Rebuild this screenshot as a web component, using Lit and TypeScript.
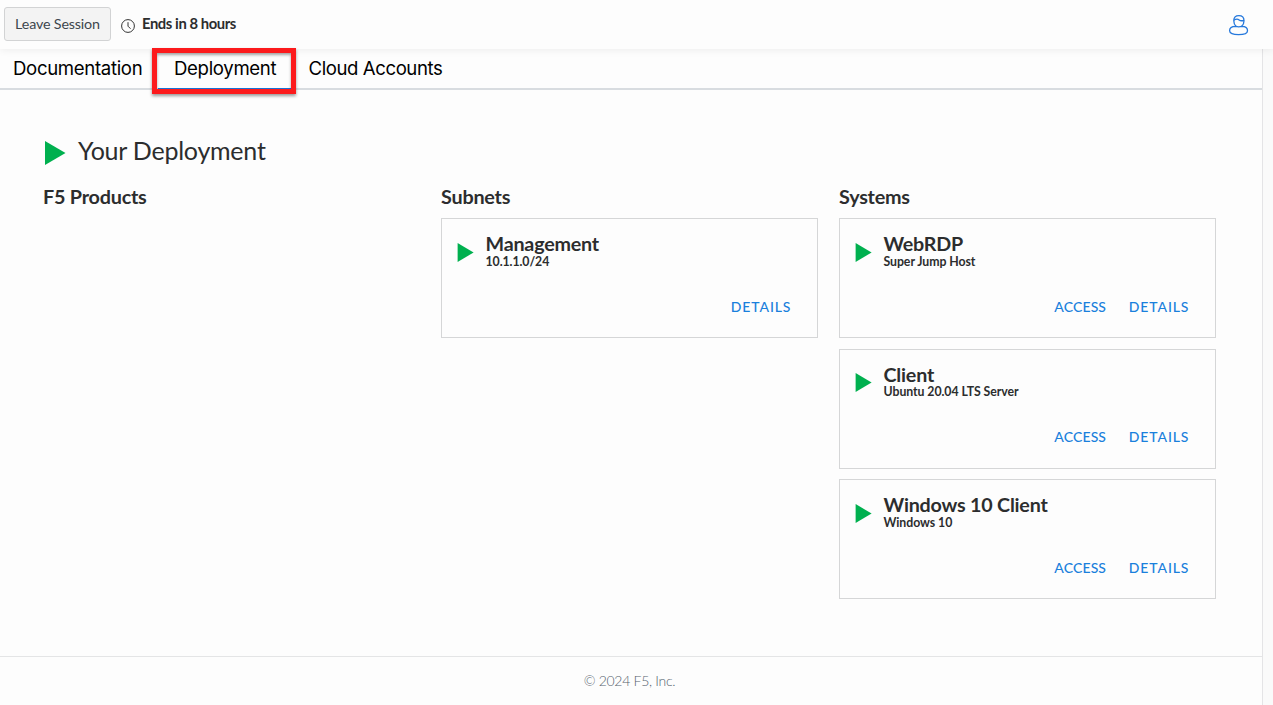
import { LitElement, html, css, nothing } from "lit";
import { customElement, property } from "lit/decorators.js";

const INK = css`#2c2d2e`;

@customElement("resource-card")
class ResourceCard extends LitElement {
  @property() name = "";
  @property() detail = "";
  @property({ type: Boolean }) access = false;

  static styles = css`
    :host { display: block; }
    .card { box-sizing: border-box; height: 120px; border: 1px solid #d5d6d7; padding: 13px 26.5px 0 15.5px; display: flex; flex-direction: column; }
    .head { display: flex; height: 61.8px; }
    .play { width: 17px; height: 19px; margin: 10.8px 11.5px 0 -0.5px; flex: none; display: block; }
    .name { font-size: 19.7px; line-height: 24px; font-weight: 700; color: ${INK}; letter-spacing: -0.2px; white-space: nowrap; }
    .detail { font-size: 12.3px; line-height: 14px; margin-top: -1.2px; font-weight: 700; color: ${INK}; letter-spacing: -0.06px; white-space: nowrap; }
    .actions { display: flex; justify-content: flex-end; gap: 22.7px; padding-top: 4px; }
    .action { font-size: 14px; line-height: 18px; font-weight: 500; color: #1a80dc; letter-spacing: 0.88px; margin-right: -0.88px; }
    .tight { letter-spacing: 0.13px; margin-right: 0; }
  `;

  render() {
    return html`<div class="card">
      <div class="head">
        <svg class="play" viewBox="0 0 17 19"><path d="M0.6 0.1L16.6 9.5L0.6 18.9Z" fill="#00b04f" /></svg>
        <div>
          <div class="name">${this.name}</div>
          <div class="detail">${this.detail}</div>
        </div>
      </div>
      <div class="actions">
        ${this.access ? html`<span class="action tight">ACCESS</span>` : nothing}
        <span class="action">DETAILS</span>
      </div>
    </div>`;
  }
}

@customElement("app-root")
class AppRoot extends LitElement {
  static styles = css`
    :host { display: flex; flex-direction: column; height: 705px; overflow: hidden; background: #fdfdfd; font-family: Lato, "Liberation Sans", sans-serif; color: ${INK}; }
    .topbar { height: 49px; flex: none; display: flex; align-items: flex-start; box-sizing: border-box; padding: 7px 24px 0 4px; position: relative; z-index: 1; background: #fdfdfd; box-shadow: 0 1px 8px rgba(0,0,0,.07); }
    .leave { box-sizing: border-box; width: 107px; height: 34px; border: 1px solid #d2d3d4; border-radius: 3px; background: #f3f3f3; color: #3d464d; font: 400 14.3px/32px Lato, sans-serif; letter-spacing: -0.16px; padding: 0; text-align: center; white-space: nowrap; }
    .clock { width: 14px; height: 14px; margin: 12px 7px 0 10px; display: block; }
    .ends { font-size: 14.8px; line-height: 18px; font-weight: 700; letter-spacing: -0.42px; margin-top: 7px; white-space: nowrap; }
    .user { width: 21px; height: 22px; margin: 7px 0 0 auto; display: block; }
    .body { flex: 1; display: flex; min-height: 0; }
    .page { width: 1262px; flex: none; display: flex; flex-direction: column; }
    .track { flex: 1; border-left: 1px solid #e4e4e6; background: #fafafa; }
    .tabs { display: flex; height: 41px; box-sizing: border-box; flex: none; border-bottom: 2px solid #d8dce0; padding-left: 13px; }
    .tab { font: 400 18.6px/22px Inter, sans-serif; letter-spacing: -0.33px; color: #000; white-space: nowrap; padding-top: 8px; height: 32px; box-sizing: border-box; }
    .doc { width: 145px; }
    .dep { width: 133px; box-sizing: border-box; height: 41px; border-bottom: 2px solid #1a73d8; padding-left: 16px; position: relative; }
    .cloud { padding-left: 17.5px; letter-spacing: -0.42px; }
    .marker { position: absolute; left: -6px; top: -1px; width: 144px; height: 46px; box-sizing: border-box; border: 5px solid #fc1a1c; box-shadow: 0 2px 3px rgba(0,0,0,.4), inset 0 2px 3px rgba(0,0,0,.35); z-index: 2; }
    .content { flex: 1; padding: 46px 46px 0 43px; }
    .title { display: flex; height: 49px; }
    .title svg { width: 21px; height: 24px; margin: 5px 12px 0 2px; display: block; }
    .title h1 { margin: 0; font-size: 25px; line-height: 28px; font-weight: 400; letter-spacing: -0.23px; white-space: nowrap; }
    .columns { display: grid; grid-template-columns: 377px 377px 377px; gap: 21px; }
    .columns h2 { margin: 0 0 10px; font-size: 19.8px; line-height: 23px; font-weight: 700; letter-spacing: -0.22px; }
    .stack { display: flex; flex-direction: column; gap: 10.5px; }
    .footer { height: 49px; flex: none; box-sizing: border-box; border-top: 1px solid #e4e5e6; text-align: center; font-size: 14px; line-height: 18px; letter-spacing: -0.28px; padding: 15px 3px 0 0; color: #56636e; font-weight: 300; }
  `;

  render() {
    return html`
      <header class="topbar">
        <button class="leave">Leave Session</button>
        <svg class="clock" viewBox="0 0 14 14" fill="none" stroke="#333" stroke-width="1"><circle cx="7" cy="7" r="6.4" /><path d="M7 3.2V7.2L9.5 9.7" /></svg>
        <span class="ends">Ends in 8 hours</span>
        <svg class="user" viewBox="-0.5 0 21 22" fill="none" stroke="#2578dc" stroke-width="1.3">
          <path d="M7.6 12.3C5.9 11 5.3 9 5.3 6.7C5.3 3.4 7.3 1.6 10.4 1.6S15.5 3.4 15.5 6.7C15.5 9 14.8 11 13.1 12.3" />
          <path d="M5.3 6.2Q8.6 4.4 10.6 5.9T15.4 6.3" />
          <path d="M1.1 16.7C1.1 14 3.6 12.4 7 12.4Q10.2 13.2 13.4 12.4C16.8 12.4 19 14 19 16.7C19 19.4 15.6 20.6 10 20.6S1.1 19.4 1.1 16.7Z" />
        </svg>
      </header>
      <div class="body">
        <main class="page">
          <nav class="tabs">
            <div class="tab doc">Documentation</div>
            <div class="tab dep">Deployment<span class="marker"></span></div>
            <div class="tab cloud">Cloud Accounts</div>
          </nav>
          <section class="content">
            <div class="title">
              <svg viewBox="0 0 21 24"><path d="M0 0L20.5 12L0 24Z" fill="#00b04f" /></svg>
              <h1>Your Deployment</h1>
            </div>
            <div class="columns">
              <div><h2>F5 Products</h2></div>
              <div><h2>Subnets</h2>
                <resource-card name="Management" detail="10.1.1.0/24"></resource-card>
              </div>
              <div><h2>Systems</h2>
                <div class="stack">
                  <resource-card name="WebRDP" detail="Super Jump Host" access></resource-card>
                  <resource-card name="Client" detail="Ubuntu 20.04 LTS Server" access></resource-card>
                  <resource-card name="Windows 10 Client" detail="Windows 10" access></resource-card>
                </div>
              </div>
            </div>
          </section>
          <footer class="footer">© 2024 F5, Inc.</footer>
        </main>
        <div class="track"></div>
      </div>`;
  }
}
